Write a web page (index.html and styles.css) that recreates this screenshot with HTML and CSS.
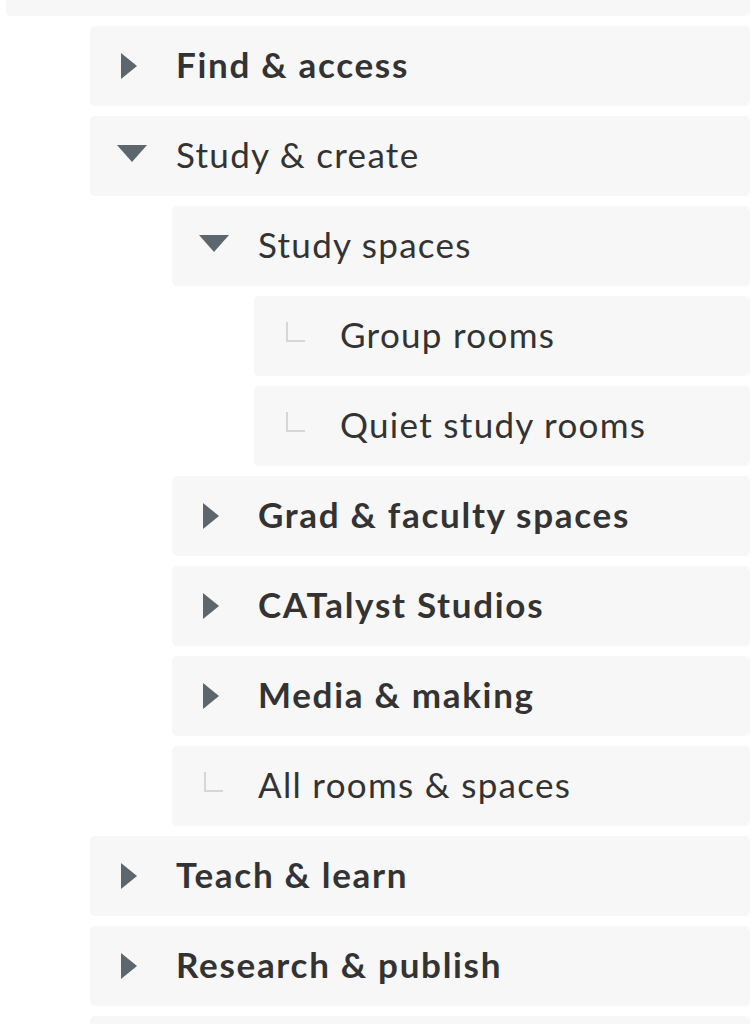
FILE: index.html
```html
<!DOCTYPE html>
<html>
<head>
<meta charset="utf-8">
<link rel="stylesheet" href="styles.css">
</head>
<body>
<ul class="tree tree-root">
  <li class="item item-top">
    <div class="row"></div>
    <ul class="tree">
      <li class="item">
        <div class="row"><span class="icon"><span class="tri tri-right"></span></span><span class="label bold">Find &amp; access</span></div>
      </li>
      <li class="item">
        <div class="row"><span class="icon"><span class="tri tri-down"></span></span><span class="label">Study &amp; create</span></div>
        <ul class="tree">
          <li class="item">
            <div class="row"><span class="icon"><span class="tri tri-down"></span></span><span class="label">Study spaces</span></div>
            <ul class="tree">
              <li class="item">
                <div class="row"><span class="icon"><span class="corner"></span></span><span class="label">Group rooms</span></div>
              </li>
              <li class="item">
                <div class="row"><span class="icon"><span class="corner"></span></span><span class="label">Quiet study rooms</span></div>
              </li>
            </ul>
          </li>
          <li class="item">
            <div class="row"><span class="icon"><span class="tri tri-right"></span></span><span class="label bold">Grad &amp; faculty spaces</span></div>
          </li>
          <li class="item">
            <div class="row"><span class="icon"><span class="tri tri-right"></span></span><span class="label bold">CATalyst Studios</span></div>
          </li>
          <li class="item">
            <div class="row"><span class="icon"><span class="tri tri-right"></span></span><span class="label bold">Media &amp; making</span></div>
          </li>
          <li class="item">
            <div class="row"><span class="icon"><span class="corner"></span></span><span class="label">All rooms &amp; spaces</span></div>
          </li>
        </ul>
      </li>
      <li class="item">
        <div class="row"><span class="icon"><span class="tri tri-right"></span></span><span class="label bold">Teach &amp; learn</span></div>
      </li>
      <li class="item">
        <div class="row"><span class="icon"><span class="tri tri-right"></span></span><span class="label bold">Research &amp; publish</span></div>
      </li>
      <li class="item">
        <div class="row"></div>
      </li>
    </ul>
  </li>
</ul>
</body>
</html>
```

FILE: styles.css
```css
html, body {
  margin: 0;
  padding: 0;
  background: #ffffff;
  overflow: hidden;
}
body {
  font-family: Lato, "Liberation Sans", sans-serif;
  color: #333333;
  height: 1024px;
}
.tree {
  list-style: none;
  margin: 0;
  padding: 0;
}
.tree-root {
  margin-top: -64px;
  margin-left: 6px;
}
.tree .tree {
  margin-left: 82px;
}
.item-top > .tree {
  margin-left: 84px;
}
.row {
  height: 80px;
  background: #f7f7f7;
  border-radius: 5px;
  margin-bottom: 10px;
  display: flex;
  align-items: center;
}
.icon {
  width: 36px;
  margin-left: 24px;
  display: flex;
  justify-content: center;
  align-items: center;
  flex-shrink: 0;
}
.label {
  margin-left: 26px;
  margin-top: -4px;
  font-size: 35px;
  white-space: nowrap;
  letter-spacing: 1.3px;
}
.bold {
  font-weight: 700;
  letter-spacing: 1.7px;
}
.tri {
  display: block;
  width: 0;
  height: 0;
}
.tri-right {
  border-top: 13px solid transparent;
  border-bottom: 13px solid transparent;
  border-left: 16px solid #5d666d;
  margin-left: -6px;
}
.tri-down {
  border-left: 15px solid transparent;
  border-right: 15px solid transparent;
  border-top: 17px solid #5d666d;
  margin-top: -6px;
}
.corner {
  display: block;
  width: 17px;
  height: 18px;
  border-left: 2px solid #d6d6d6;
  border-bottom: 2px solid #d6d6d6;
  margin-top: -8px;
  margin-left: -2px;
}
```
